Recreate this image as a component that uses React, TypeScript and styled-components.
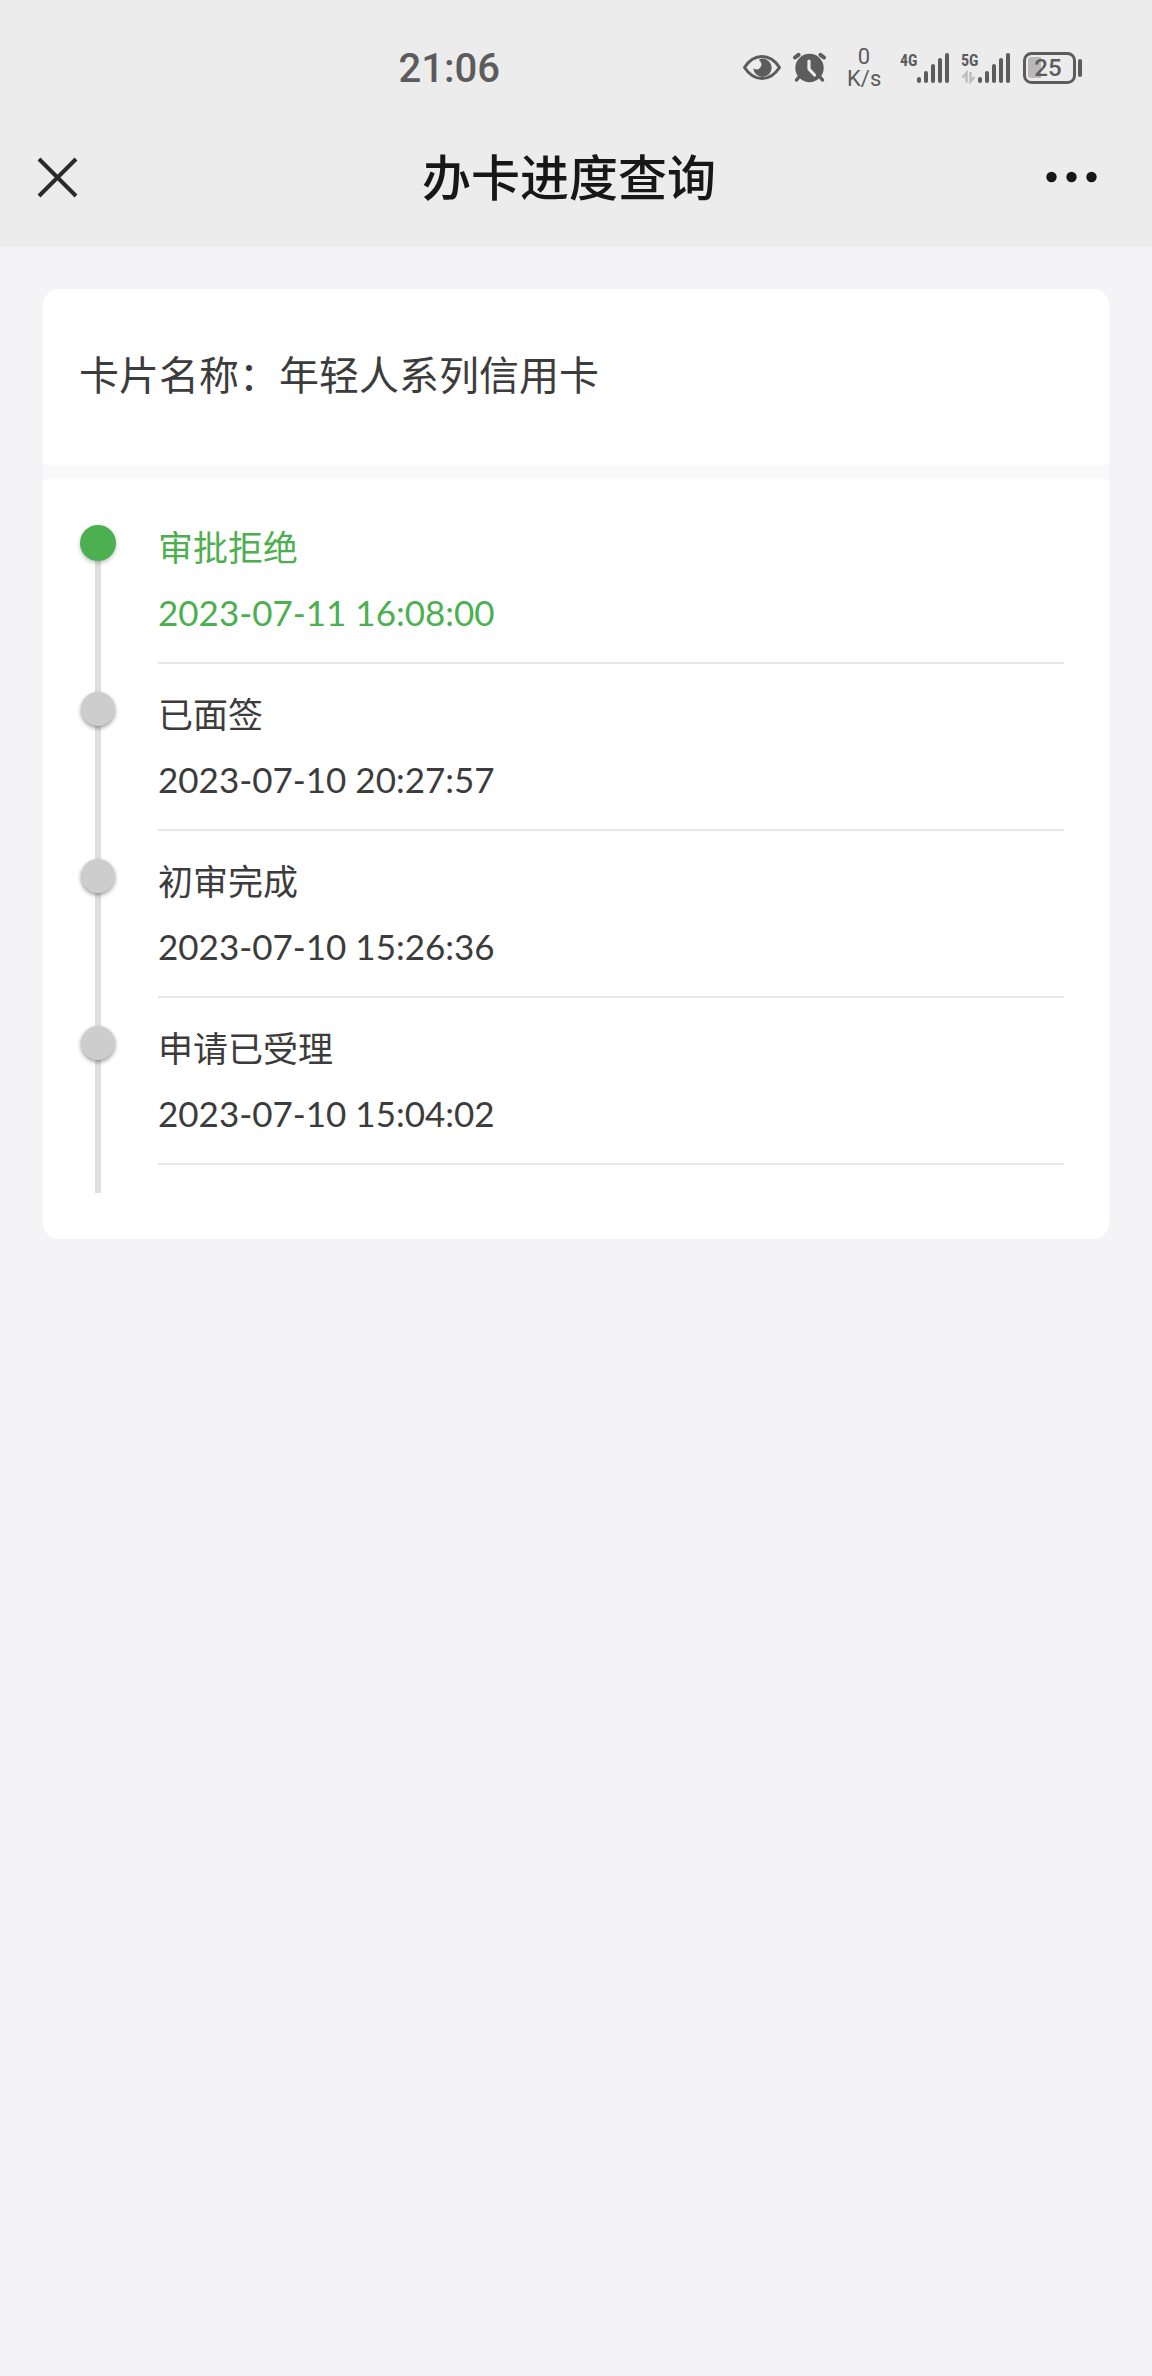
import React from "react";
import styled, { createGlobalStyle } from "styled-components";

const GlobalStyle = createGlobalStyle`
  *, *::before, *::after { box-sizing: border-box; }
  body {
    margin: 0;
    background: #f4f4f7;
    color: #3c3c3c;
    font-family: Lato, "Noto Sans CJK SC", sans-serif;
  }
`;

const TopArea = styled.header`
  background: #ececec;
`;

const StatusBar = styled.div`
  display: flex;
  align-items: center;
  justify-content: space-between;
  height: 107px;
  padding: 28px 69px 0 34.6%;
  color: #5c5c5c;
  font-family: Roboto, "Noto Sans CJK SC", sans-serif;
`;

const Clock = styled.time`
  padding-top: 2px;
  font-size: 40px;
  line-height: 48px;
  font-weight: 500;
`;

const StatusIcons = styled.div`
  display: flex;
  align-items: center;
  gap: 11px;
  svg { display: block; flex: none; }
`;

const NetSpeed = styled.div`
  width: 34px;
  margin: 0 8px;
  text-align: center;
  font-size: 22px;
  line-height: 22px;
`;

const NavBar = styled.nav`
  display: flex;
  align-items: center;
  height: 140px;
  color: #171717;
`;

const NavButton = styled.button<{ $side: "left" | "right" }>`
  display: flex;
  align-items: center;
  justify-content: ${(p) => (p.$side === "left" ? "flex-start" : "flex-end")};
  width: ${(p) => (p.$side === "left" ? 112 : 126)}px;
  height: 100%;
  padding: ${(p) => (p.$side === "left" ? "0 0 0 37px" : "0 54px 0 0")};
  border: 0;
  background: none;
  color: inherit;
  cursor: pointer;
`;

const NavTitle = styled.h1`
  flex: 1;
  margin: 0;
  padding-bottom: 4px;
  text-align: center;
  font-family: "Noto Sans CJK SC", sans-serif;
  font-size: 49px;
  line-height: 64px;
  font-weight: 500;
`;

const Card = styled.main`
  margin: 42px 43px;
  border-radius: 16px;
  background: #fff;
  overflow: hidden;
`;

const CardName = styled.h2`
  margin: 0;
  padding: 56px 36px 60px;
  border-bottom: 14px solid #f9f9f9;
  font-size: 40px;
  line-height: 60px;
  font-weight: 400;
`;

const Timeline = styled.ol`
  margin: 0;
  padding: 46px 45px 46px 37px;
  list-style: none;
`;

const Step = styled.li<{ $active: boolean }>`
  display: flex;
  gap: 42px;
  color: ${(p) => (p.$active ? "#4caf50" : "inherit")};
`;

const Rail = styled.div`
  display: flex;
  flex-direction: column;
  align-items: center;
  width: 36px;
`;

const Dot = styled.span<{ $active: boolean }>`
  position: relative;
  flex: none;
  width: ${(p) => (p.$active ? 36 : 34)}px;
  height: ${(p) => (p.$active ? 36 : 34)}px;
  border-radius: 50%;
  background: ${(p) => (p.$active ? "#4caf50" : "#cdcdcd")};
  box-shadow: 0 2px 4px rgba(0, 0, 0, ${(p) => (p.$active ? 0.25 : 0.4)});
`;

const RailLine = styled.span`
  flex: 1;
  width: 6px;
  background: #dfdfdf;
`;

const StepBody = styled.div`
  display: flex;
  flex: 1;
  flex-direction: column;
  gap: 21px;
  margin-bottom: 28px;
  padding-bottom: 28px;
  border-bottom: 2px solid #e8e8e8;
  font-size: 35px;
  line-height: 44px;
`;

const EyeIcon = () => (
  <svg width="40" height="32" viewBox="0 0 40 32" fill="none" aria-hidden="true">
    <path
      d="M2.5 15.5C7 8.500 13 4.500 20 4.500S33 8.500 37.500 15.500C33 22.500 27 26.500 20 26.500S7 22.500 2.500 15.500Z"
      stroke="currentColor"
      strokeWidth="3"
      strokeLinejoin="round"
    />
    <path
      d="M20.500 6.500a9.200 9.200 0 1 1-9.200 9.800c2 1.600 4.800 1.400 6.600-.4 2.200-2.200 2-5.600-.6-7.400-.5-.4-.2-.8.2-1 .9-.7 2-1 3-1Z"
      fill="currentColor"
    />
  </svg>
);

const AlarmIcon = () => (
  <svg width="35" height="32" viewBox="0 0 35 32" fill="none" aria-hidden="true">
    <g stroke="currentColor" strokeWidth="4" strokeLinecap="round">
      <path d="M2 5.500 5.500 2.800M31 5.500 27.500 2.800" />
      <path d="M6 25 3.500 28M27 25l2.500 3" strokeWidth="3.500" />
    </g>
    <circle cx="16.500" cy="16" r="14.200" fill="currentColor" />
    <path d="M16 9v8l5.500 6" stroke="#ececec" strokeWidth="3.200" strokeLinecap="round" strokeLinejoin="round" />
  </svg>
);

const BAR_HEIGHTS = [6, 12, 19, 25, 30];

const SignalIcon = ({ label, data }: { label: string; data?: boolean }) => (
  <svg width="50" height="32" viewBox="0 0 50 32" fill="currentColor" role="img" aria-label={label}>
    <text x="0" y="14" fontSize="16" fontWeight="700" fontFamily="'Roboto Condensed', Roboto, sans-serif">
      {label}
    </text>
    {data && (
      <path
        d="M5.500 30.500V21L1.500 25.500M9.500 20v9.500l4-4.500"
        stroke="#bdbdbd"
        strokeWidth="2.500"
        fill="none"
      />
    )}
    {BAR_HEIGHTS.map((h, i) => (
      <rect key={h} x={17 + i * 7} y={31 - h} width="4" height={h} rx="2" />
    ))}
  </svg>
);

const BatteryIcon = ({ level }: { level: number }) => (
  <svg width="61" height="32" viewBox="0 0 61 32" fill="currentColor" role="img" aria-label={`${level}%`}>
    <rect x="2.500" y="1.500" width="50" height="29" rx="7" fill="none" stroke="currentColor" strokeWidth="3" />
    <path d="M9 5h10v21H9a3 3 0 0 1-3-3V8a3 3 0 0 1 3-3Z" fill="#b8b8b8" />
    <rect x="56" y="7" width="4" height="18" rx="2" />
    <text x="26" y="24" textAnchor="middle" fontSize="24" fontWeight="500" fontFamily="Roboto, sans-serif">
      {level}
    </text>
  </svg>
);

const CloseIcon = () => (
  <svg width="41" height="41" viewBox="0 0 41 41" fill="none" aria-hidden="true">
    <path d="M2 2l37 37M39 2 2 39" stroke="#2a2a2a" strokeWidth="4" />
  </svg>
);

const MoreIcon = () => (
  <svg width="52" height="12" viewBox="0 0 52 12" fill="currentColor" aria-hidden="true">
    <circle cx="5.500" cy="6" r="5.200" />
    <circle cx="25.500" cy="6" r="5.200" />
    <circle cx="45.500" cy="6" r="5.200" />
  </svg>
);

const steps = [
  { title: "审批拒绝", time: "2023-07-11 16:08:00" },
  { title: "已面签", time: "2023-07-10 20:27:57" },
  { title: "初审完成", time: "2023-07-10 15:26:36" },
  { title: "申请已受理", time: "2023-07-10 15:04:02" },
];

export default function App() {
  return (
    <>
      <GlobalStyle />
      <TopArea>
        <StatusBar>
          <Clock>21:06</Clock>
          <StatusIcons>
            <EyeIcon />
            <AlarmIcon />
            <NetSpeed>
              0<br />
              K/s
            </NetSpeed>
            <SignalIcon label="4G" />
            <SignalIcon label="5G" data />
            <BatteryIcon level={25} />
          </StatusIcons>
        </StatusBar>
        <NavBar>
          <NavButton type="button" $side="left" aria-label="关闭">
            <CloseIcon />
          </NavButton>
          <NavTitle>办卡进度查询</NavTitle>
          <NavButton type="button" $side="right" aria-label="更多">
            <MoreIcon />
          </NavButton>
        </NavBar>
      </TopArea>
      <Card>
        <CardName>卡片名称：年轻人系列信用卡</CardName>
        <Timeline>
          {steps.map((step, i) => (
            <Step key={step.time} $active={i === 0}>
              <Rail>
                <Dot $active={i === 0} />
                <RailLine />
              </Rail>
              <StepBody>
                <span>{step.title}</span>
                <time>{step.time}</time>
              </StepBody>
            </Step>
          ))}
        </Timeline>
      </Card>
    </>
  );
}
